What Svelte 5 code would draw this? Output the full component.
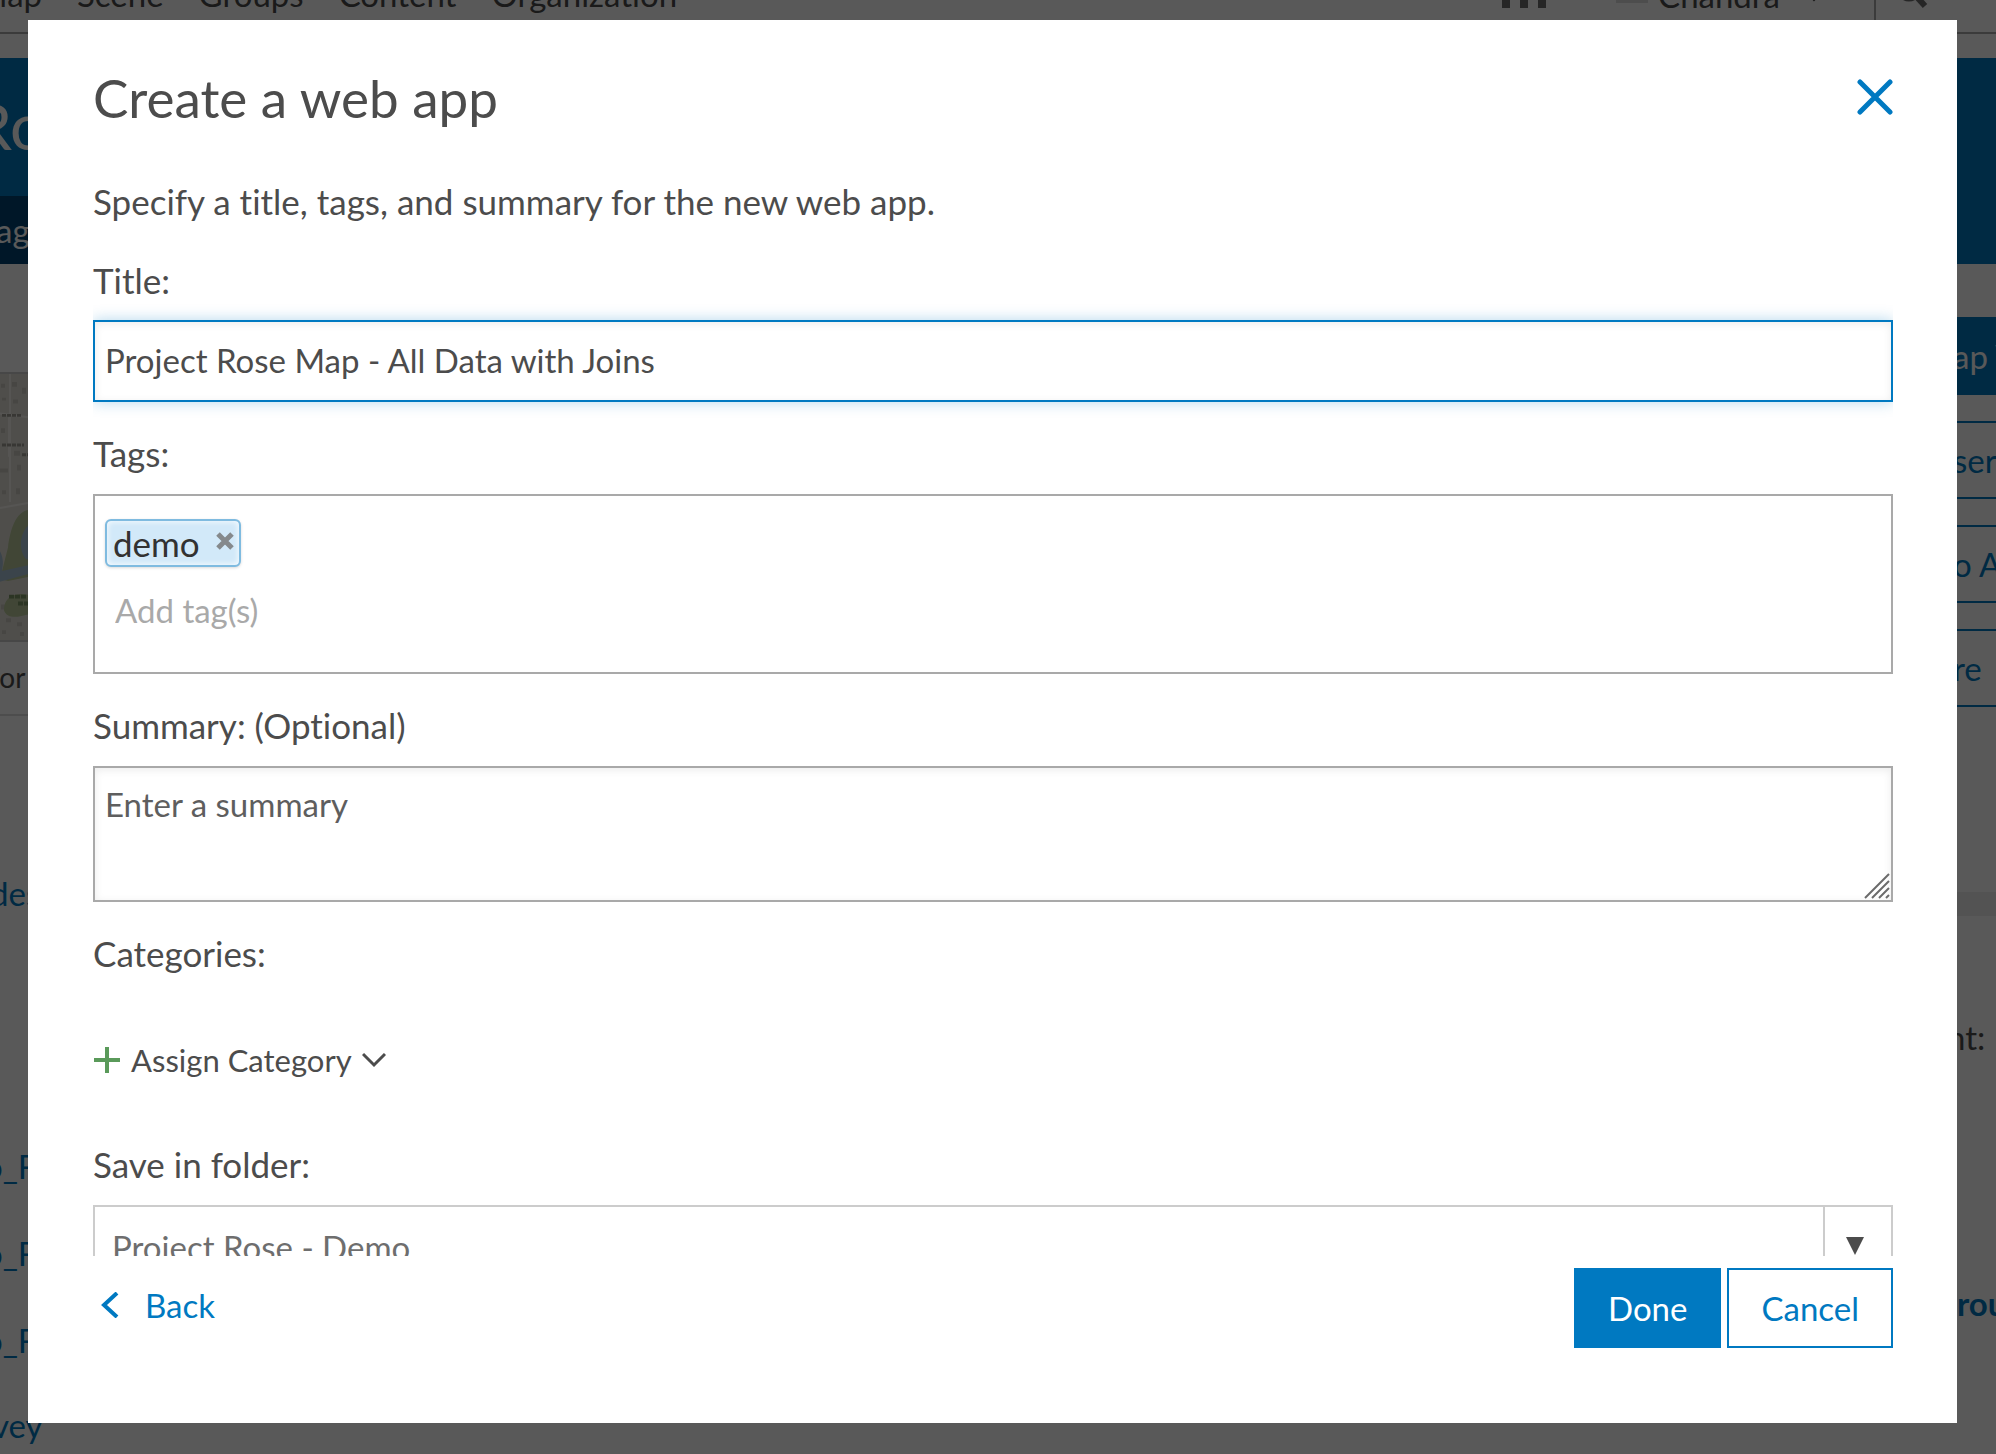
<script>
  let title = $state('Project Rose Map - All Data with Joins');
  let summary = $state('');
  let newTag = $state('');
  let tags = $state(['demo']);
  let folder = $state('Project Rose - Demo');

  const nav = ['Map', 'Scene', 'Groups', 'Content', 'Organization'];
  const layers = ['o_F', 'o_F', 'o_F'];

  function removeTag(tag) {
    tags = tags.filter((t) => t !== tag);
  }
</script>

<div class="page" inert>
  <header class="top">
    <nav>
      {#each nav as item}<a href="#top">{item}</a>{/each}
    </nav>
    <div class="account">
      <svg class="bars" width="44" height="32" viewBox="0 0 44 32"><path d="M0 0h8v32H0zM18 0h8v32h-8zM36 0h8v32h-8z" fill="#6e6e6e" /></svg>
      <span class="avatar"></span>
      <span class="user">Chandra</span>
      <svg class="caret" width="20" height="12" viewBox="0 0 20 12"><path d="M1 1l9 9 9-9" fill="none" stroke="#4c4c4c" stroke-width="2" /></svg>
      <span class="search">
        <svg width="32" height="32" viewBox="0 0 32 32"><circle cx="13" cy="13" r="10" fill="none" stroke="#6e6e6e" stroke-width="5" /><path d="M20 20l9 10" stroke="#6e6e6e" stroke-width="6" /></svg>
      </span>
    </div>
  </header>
  <div class="banner">
    <div class="name"><span>Ro</span></div>
    <div class="tabs"><span>ag</span></div>
  </div>
  <div class="columns">
    <div class="left">
      <svg class="map" viewBox="0 0 28 270" preserveAspectRatio="none">
        <rect width="28" height="270" fill="#e3e0d8" />
        <g fill="#cbc8c0">
          <path d="M1 10h4v4H1zM12 8h5v5h-5zM22 14h4v6h-4zM2 24h4v3H2zM13 26h5v4h-5zM1 55h4v5H1zM14 78h6v5h-6zM0 96h8v4H0zM17 92h4v6h-4zM2 118h4v4H2zM16 116h4v6h-4zM1 234h4v5H1zM6 248h5v4H6zM17 252h5v4h-5zM2 260h4v4H2zM20 262h4v4h-4z" />
        </g>
        <path d="M0 40l28 4M10 0v130M0 136l28-5M9 44v40" stroke="#f5f3ee" stroke-width="2" fill="none" />
        <path d="M28 138c-12 2-18 20-20 38L0 208l8 2 20-4zM4 240c0-16 14-18 24-16v20c-8 2-20 6-24-4z" fill="#b9c99a" />
        <path d="M28 154c-8 8-10 24-2 34h2zM0 180c4 8 3 14 2 20l26-6v9L0 211z" fill="#a8c2d8" />
        <path d="M2 42h20M2 72h22M22 82h6" stroke="#a09d95" stroke-width="3" stroke-dasharray="4 1" />
        <path d="M9 226h18M18 233h10" stroke="#7f9869" stroke-width="4" stroke-dasharray="5 1" />
      </svg>
      <div class="caption">for</div>
      <a class="desc" href="#desc">des</a>
      <div class="layers">
        {#each layers as layer}<a href="#layer">{layer}</a>{/each}
        <a class="last" href="#survey">vey</a>
      </div>
    </div>
    <div class="right">
      <button class="solid">ap V</button>
      <button>ser</button>
      <button>o A</button>
      <button>re</button>
      <div class="band"></div>
      <div class="note">nt:</div>
      <a class="group" href="#groups">rou</a>
    </div>
  </div>
</div>

<div class="overlay">
  <div class="dialog" role="dialog" aria-modal="true" aria-labelledby="dialog-title">
    <div class="head">
      <h1 id="dialog-title">Create a web app</h1>
      <button class="close" aria-label="Close">
        <svg width="36" height="36" viewBox="0 0 36 36"><path d="M3 3l30 30M33 3L3 33" stroke="#0079c1" stroke-width="5" stroke-linecap="round" /></svg>
      </button>
    </div>

    <div class="body">
      <p>Specify a title, tags, and summary for the new web app.</p>

      <label for="title">Title:</label>
      <input id="title" class="title" bind:value={title} />

      <label for="tag">Tags:</label>
      <div class="tags">
        <div class="chips">
          {#each tags as tag}
            <span class="chip">
              {tag}
              <button aria-label="Remove tag" onclick={() => removeTag(tag)}>
                <svg width="18" height="18" viewBox="0 0 18 18"><path d="M2 2l14 14M16 2L2 16" stroke="#85898c" stroke-width="5" /></svg>
              </button>
            </span>
          {/each}
        </div>
        <input id="tag" placeholder="Add tag(s)" bind:value={newTag} />
      </div>

      <label for="summary">Summary: (Optional)</label>
      <div class="summary">
        <textarea id="summary" placeholder="Enter a summary" bind:value={summary}></textarea>
        <svg class="grip" width="26" height="26" viewBox="0 0 26 26"><path d="M1 25L25 1M8 25L25 8M15 25l10-10M22 25l3-3" stroke="#6b6b6b" stroke-width="2" /></svg>
      </div>

      <div class="label">Categories:</div>
      <button class="assign">
        <svg width="28" height="28" viewBox="0 0 28 28"><path d="M14 1v26M1 14h26" stroke="#5a9a5a" stroke-width="4" /></svg>
        <span>Assign Category</span>
        <svg width="24" height="18" viewBox="0 0 24 18"><path d="M1 3l11 11L23 3" fill="none" stroke="#4c4c4c" stroke-width="3" /></svg>
      </button>

      <label for="folder">Save in folder:</label>
      <div class="folder">
        <select id="folder" bind:value={folder}>
          <option>Project Rose - Demo</option>
        </select>
        <span class="arrow"><svg width="18" height="18" viewBox="0 0 18 18"><path d="M0 0h18L9 18z" fill="#4c4c4c" /></svg></span>
      </div>
    </div>

    <div class="foot">
      <button class="back">
        <svg width="18" height="26" viewBox="0 0 18 26"><path d="M16 1L3 13l13 12" fill="none" stroke="#0079c1" stroke-width="4" /></svg>
        Back
      </button>
      <div class="actions">
        <button class="done">Done</button>
        <button class="cancel">Cancel</button>
      </div>
    </div>
  </div>
</div>

<style>
  :global(body) {
    overflow: hidden;
    font-family: Lato, 'Open Sans', sans-serif;
    font-variant-ligatures: none;
    color: #4c4c4c;
  }
  * {
    box-sizing: border-box;
  }
  button,
  input,
  textarea,
  select {
    margin: 0;
    padding: 0;
    border: 0;
    border-radius: 0;
    outline: 0;
    background: none;
    font: inherit;
    color: inherit;
  }
  a {
    color: #0079c1;
    text-decoration: none;
  }
  svg {
    display: block;
    flex: none;
  }

  /* Page behind the dialog */
  .page {
    height: 100vh;
    overflow: hidden;
    background: #fff;
    font-size: 33px;
    line-height: 40px;
  }
  .top {
    display: flex;
    justify-content: space-between;
    align-items: flex-end;
    height: 58px;
    background: linear-gradient(#aaa, #aaa) 0 32px / 100% 2px no-repeat;
  }
  nav {
    display: flex;
    gap: 35px;
    margin: 0 0 44px -23px;
  }
  nav a {
    color: #4c4c4c;
  }
  .account {
    display: flex;
    align-items: flex-end;
    height: 58px;
    padding-bottom: 24px;
  }
  .bars {
    margin: 0 70px 26px 0;
  }
  .avatar {
    width: 32px;
    height: 32px;
    margin: 0 10px 31px 0;
    border: 3px solid #ddd;
    background: #fff;
  }
  .user {
    margin-bottom: 19px;
  }
  .caret {
    margin: 0 50px 32px 24px;
  }
  .search {
    width: 122px;
    height: 34px;
    padding-left: 20px;
    border-left: 2px solid #aaa;
  }
  .search svg {
    margin-top: -24px;
  }
  .banner {
    height: 206px;
    background: #0079c1;
    color: #fff;
  }
  .name {
    height: 138px;
    padding-top: 32px;
    font-size: 64px;
    line-height: 72px;
  }
  .name span {
    margin-left: -28px;
  }
  .tabs {
    width: 60%;
    height: 68px;
    padding-top: 14px;
    background: #004474;
  }
  .tabs span {
    margin-left: -4px;
  }
  .columns {
    display: flex;
    justify-content: space-between;
  }
  .left {
    width: 28px;
    padding-top: 108px;
    white-space: nowrap;
  }
  .map {
    width: 28px;
    height: 270px;
    border-top: 2px solid #ccc;
    border-bottom: 2px solid #ccc;
  }
  .caption {
    height: 74px;
    margin-left: -10px;
    padding-top: 15px;
    border-bottom: 2px solid #ddd;
    font-size: 28px;
  }
  .left a {
    display: block;
  }
  .desc {
    margin: 157px 0 0 -10px;
  }
  .layers {
    display: flex;
    flex-direction: column;
    gap: 47px;
    margin: 233px 0 0 -16px;
  }
  .layers .last {
    margin: -2px 0 0 8px;
  }
  .right {
    display: flex;
    flex-direction: column;
    width: 43px;
    padding-top: 53px;
    white-space: nowrap;
  }
  .right button {
    height: 78px;
    margin-bottom: 26px;
    border: 2px solid #0079c1;
    border-width: 2px 0;
    color: #0079c1;
    text-align: left;
  }
  .right .solid {
    background: #0079c1;
    color: #fff;
  }
  .band {
    height: 24px;
    margin-top: 159px;
    background: #eee;
  }
  .note {
    margin: 101px 0 0 -6px;
  }
  .group {
    margin: 226px 0 0 4px;
    font-weight: 700;
  }

  /* Dialog */
  .overlay {
    position: fixed;
    inset: 0;
    display: flex;
    padding: 20px 39px 31px 28px;
    background: rgba(0, 0, 0, 0.65);
  }
  .dialog {
    display: flex;
    flex: 1;
    flex-direction: column;
    min-width: 0;
    padding: 48px 64px 75px 65px;
    background: #fff;
    font-size: 35px;
    line-height: 40px;
  }
  .head {
    display: flex;
    justify-content: space-between;
    align-items: flex-start;
    margin-bottom: 53px;
  }
  h1 {
    margin: 0;
    font-size: 53px;
    font-weight: 400;
    line-height: 60px;
  }
  .close {
    margin-top: 11px;
  }
  .body {
    flex: 1;
    min-height: 0;
    overflow: hidden;
  }
  p {
    margin: 0 0 39px;
  }
  label,
  .label {
    display: block;
    margin: 31px 0 21px;
  }
  p + label {
    margin-top: 0;
    margin-bottom: 20px;
  }
  .title {
    display: block;
    width: 100%;
    height: 82px;
    padding: 0 10px 3px;
    border: 2px solid #0079c1;
    box-shadow:
      0 0 14px rgba(0, 121, 193, 0.3),
      inset 0 2px 8px rgba(0, 0, 0, 0.08);
    font-size: 33px;
  }
  .tags {
    height: 180px;
    padding: 23px 10px;
    border: 2px solid #a9a9a9;
  }
  .chips {
    display: flex;
    gap: 8px;
  }
  .chip {
    display: flex;
    align-items: center;
    gap: 16px;
    height: 48px;
    padding: 0 5px 0 6px;
    border: 2px solid #7fbbe0;
    border-radius: 6px;
    background: #d2e9f9;
    box-shadow: inset 0 0 6px #fff, 0 1px 3px rgba(0, 0, 0, 0.15);
    color: #323232;
    font-size: 35px;
  }
  .chip button {
    margin-bottom: 4px;
  }
  .tags input {
    display: block;
    width: 100%;
    height: 44px;
    margin-top: 21px;
    padding: 0 10px;
    font-size: 33px;
  }
  .tags input::placeholder {
    color: #a9a9a9;
    opacity: 1;
  }
  .summary {
    position: relative;
  }
  textarea {
    display: block;
    width: 100%;
    height: 136px;
    padding: 16px 10px;
    border: 2px solid #a9a9a9;
    box-shadow: inset 0 2px 8px rgba(0, 0, 0, 0.08);
    font-size: 33px;
    line-height: 40px;
    resize: none;
  }
  textarea::placeholder {
    color: #5e5e5e;
    opacity: 1;
  }
  .grip {
    position: absolute;
    right: 3px;
    bottom: 3px;
  }
  .assign {
    display: flex;
    align-items: center;
    gap: 10px;
    margin: 67px 0 64px;
    font-size: 31px;
  }
  .folder {
    position: relative;
    border: 2px solid #ccc;
  }
  select {
    display: block;
    appearance: none;
    width: 100%;
    height: 80px;
    padding: 0 80px 0 17px;
    color: #6e6e6e;
    font-size: 33px;
  }
  .arrow {
    position: absolute;
    inset: 0 0 0 auto;
    display: flex;
    justify-content: center;
    width: 68px;
    padding: 30px 6px 0 0;
    border-left: 2px solid #ccc;
    pointer-events: none;
  }
  .foot {
    display: flex;
    justify-content: space-between;
    padding-top: 12px;
    font-size: 33px;
  }
  .back {
    display: flex;
    align-items: center;
    gap: 26px;
    height: 74px;
    padding-left: 8px;
    color: #0079c1;
  }
  .actions {
    display: flex;
    gap: 6px;
  }
  .actions button {
    height: 80px;
    padding: 0 32px;
    border: 2px solid #0079c1;
    color: #0079c1;
  }
  .actions .done {
    background: #0079c1;
    color: #fff;
  }
</style>
